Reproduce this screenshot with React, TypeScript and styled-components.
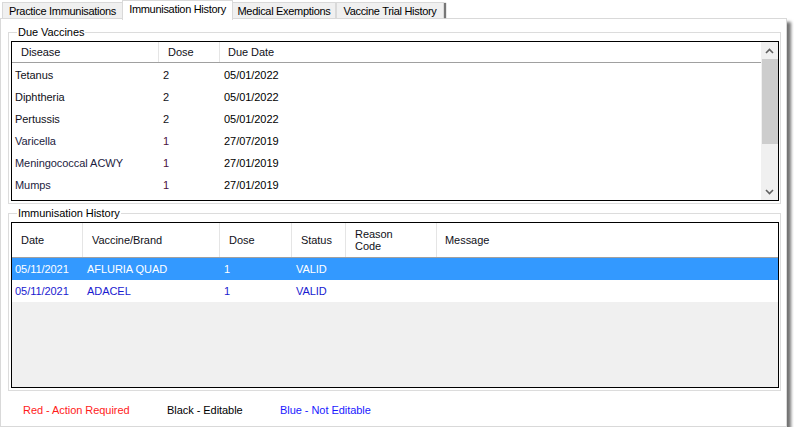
import React from 'react'
import styled, { createGlobalStyle } from 'styled-components'

const GlobalStyle = createGlobalStyle`
  html, body {
    margin: 0;
    padding: 0;
    background: #ffffff;
  }
  body {
    font-family: "Liberation Sans", Arial, sans-serif;
    font-size: 11px;
    letter-spacing: -0.05px;
    color: #000;
  }
`

interface DueVaccine {
  disease: string
  dose: string
  dueDate: string
}

interface HistoryRow {
  date: string
  brand: string
  dose: string
  status: string
}

const dueVaccines: DueVaccine[] = [
  { disease: 'Tetanus', dose: '2', dueDate: '05/01/2022' },
  { disease: 'Diphtheria', dose: '2', dueDate: '05/01/2022' },
  { disease: 'Pertussis', dose: '2', dueDate: '05/01/2022' },
  { disease: 'Varicella', dose: '1', dueDate: '27/07/2019' },
  { disease: 'Meningococcal ACWY', dose: '1', dueDate: '27/01/2019' },
  { disease: 'Mumps', dose: '1', dueDate: '27/01/2019' },
]

const history: HistoryRow[] = [
  { date: '05/11/2021', brand: 'AFLURIA QUAD', dose: '1', status: 'VALID' },
  { date: '05/11/2021', brand: 'ADACEL', dose: '1', status: 'VALID' },
]

// tab label and its width in the strip
const tabs: [string, number][] = [
  ['Practice Immunisations', 121],
  ['Immunisation History', 111],
  ['Medical Exemptions', 104],
  ['Vaccine Trial History', 108],
]

const App: React.FC = () => {
  return (
    <>
      <GlobalStyle />
      <Window>
        <TabStrip>
          {tabs.map(([t, w], i) => (
            <Tab key={t} w={w} active={i === 1} last={i === tabs.length - 1}>
              {t}
            </Tab>
          ))}
        </TabStrip>
        <Panel>
          <GroupBox>
            <Legend>Due Vaccines</Legend>
            <ListBox height={160}>
              <DueBody>
                <DueHeader>
                  <HeaderCell>Disease</HeaderCell>
                  <HeaderCell>Dose</HeaderCell>
                  <HeaderCell last>Due Date</HeaderCell>
                </DueHeader>
                {dueVaccines.map((v) => (
                  <DueRow key={v.disease}>
                    <Cell color={v.dose === '1' ? '#1c1c40' : '#101018'}>{v.disease}</Cell>
                    <Cell color={v.dose === '1' ? '#4a1040' : '#101018'}>{v.dose}</Cell>
                    <Cell>{v.dueDate}</Cell>
                  </DueRow>
                ))}
              </DueBody>
              <ScrollBar>
                <ScrollArrow>
                  <svg width="9" height="6" viewBox="0 0 9 6">
                    <polyline points="1,5 4.5,1.5 8,5" fill="none" stroke="#606060" strokeWidth="1.6" />
                  </svg>
                </ScrollArrow>
                <ScrollTrack>
                  <ScrollThumb />
                </ScrollTrack>
                <ScrollArrow>
                  <svg width="9" height="6" viewBox="0 0 9 6">
                    <polyline points="1,1 4.5,4.5 8,1" fill="none" stroke="#606060" strokeWidth="1.6" />
                  </svg>
                </ScrollArrow>
              </ScrollBar>
            </ListBox>
          </GroupBox>

          <GroupBox second>
            <Legend>Immunisation History</Legend>
            <ListBox height={166}>
              <HistoryBody>
                <HistoryHeader>
                  <HeaderCell>Date</HeaderCell>
                  <HeaderCell>Vaccine/Brand</HeaderCell>
                  <HeaderCell>Dose</HeaderCell>
                  <HeaderCell>Status</HeaderCell>
                  <HeaderCell twoLine>Reason<br />Code</HeaderCell>
                  <HeaderCell last>Message</HeaderCell>
                </HistoryHeader>
                {history.map((h, i) => (
                  <HistoryRowEl key={h.brand} selected={i === 0}>
                    <Cell>{h.date}</Cell>
                    <Cell>{h.brand}</Cell>
                    <Cell>{h.dose}</Cell>
                    <Cell>{h.status}</Cell>
                    <Cell />
                    <Cell />
                  </HistoryRowEl>
                ))}
                <EmptyArea />
              </HistoryBody>
            </ListBox>
          </GroupBox>

          <ColourKey>
            <KeyItem color="#ff1a1a" width={144}>Red - Action Required</KeyItem>
            <KeyItem color="#000000" width={113}>Black - Editable</KeyItem>
            <KeyItem color="#1a1aff">Blue - Not Editable</KeyItem>
          </ColourKey>
        </Panel>
      </Window>
    </>
  )
}

const Window = styled.div`
  width: 787px;
  display: flex;
  flex-direction: column;
`

const TabStrip = styled.div`
  display: flex;
  align-items: flex-end;
  height: 19px;
  padding-left: 2px;
  position: relative;
  z-index: 2;
`

const Tab = styled.div<{ w: number; active?: boolean; last?: boolean }>`
  box-sizing: border-box;
  width: ${(p) => p.w}px;
  height: ${(p) => (p.active ? '20px' : '17px')};
  margin-bottom: ${(p) => (p.active ? '-1px' : '0')};
  padding: 1px 0 0;
  text-align: center;
  letter-spacing: -0.3px;
  border: 1px solid #d9d9d9;
  border-bottom: ${(p) => (p.active ? 'none' : '1px solid #d9d9d9')};
  margin-left: ${(p) => (p.active ? '-1px' : '0')};
  margin-right: ${(p) => (p.active ? '-1px' : '0')};
  background: ${(p) => (p.active ? '#ffffff' : '#f0f0f0')};
  line-height: 14px;
  white-space: nowrap;
  z-index: ${(p) => (p.active ? 2 : 1)};
  box-shadow: ${(p) => (p.last ? '3px 0 1px -1px #777' : 'none')};
`

const Panel = styled.div`
  box-sizing: border-box;
  width: 787px;
  height: 409px;
  margin-top: -1px;
  border: 1px solid #d9d9d9;
  background: #ffffff;
  padding: 7px 5px 0 7px;
  display: flex;
  flex-direction: column;
  box-shadow: 4px 4px 3px rgba(0, 0, 0, 0.55);
  position: relative;
  z-index: 1;
`

const GroupBox = styled.fieldset<{ second?: boolean }>`
  margin: ${(p) => (p.second ? '3px 0 0' : '0')};
  padding: 2px 1px 2px 2px;
  border: 1px solid #dcdcdc;
  min-width: 0;
`

const Legend = styled.legend`
  padding: 0 1px;
  margin-left: 6px;
  line-height: 13px;
  color: #000;
`

const ListBox = styled.div<{ height: number }>`
  box-sizing: border-box;
  height: ${(p) => p.height}px;
  border: 1px solid #000;
  background: #fff;
  display: flex;
  overflow: hidden;
`

const DueBody = styled.div`
  flex: 1;
  display: flex;
  flex-direction: column;
`

const DueHeader = styled.div`
  display: grid;
  grid-template-columns: 147px 61px 1fr;
  height: 20px;
  border-bottom: 1px solid #a0a0a0;
  margin-bottom: 1px;
`

const HeaderCell = styled.div<{ last?: boolean; twoLine?: boolean }>`
  display: flex;
  align-items: center;
  padding-left: ${(p) => (p.last ? '8px' : '9px')};
  border-right: ${(p) => (p.last ? 'none' : '1px solid #e5e5e5')};
  line-height: ${(p) => (p.twoLine ? '12px' : 'normal')};
  color: #101018;
  white-space: nowrap;
`

const DueRow = styled.div`
  display: grid;
  grid-template-columns: 148px 61px 1fr;
  height: 22px;
  align-items: center;
`

const Cell = styled.div<{ color?: string }>`
  padding-left: 3px;
  color: ${(p) => p.color || 'inherit'};
  white-space: nowrap;
`

const ScrollBar = styled.div`
  width: 17px;
  background: #f0f0f0;
  display: flex;
  flex-direction: column;
`

const ScrollArrow = styled.div`
  height: 17px;
  display: flex;
  align-items: center;
  justify-content: center;
`

const ScrollTrack = styled.div`
  flex: 1;
  display: flex;
  flex-direction: column;
`

const ScrollThumb = styled.div`
  margin: 0 0 0 1px;
  height: 85px;
  background: #cdcdcd;
`

const HistoryBody = styled.div`
  flex: 1;
  display: flex;
  flex-direction: column;
`

const HistoryHeader = styled.div`
  display: grid;
  grid-template-columns: 71px 137px 72px 54px 91px 1fr;
  height: 34px;
  border-bottom: 1px solid #a0a0a0;
`

const HistoryRowEl = styled.div<{ selected?: boolean }>`
  display: grid;
  grid-template-columns: 72px 137px 72px 54px 91px 1fr;
  height: 22px;
  align-items: center;
  background: ${(p) => (p.selected ? '#3399ff' : '#ffffff')};
  color: ${(p) => (p.selected ? '#ffffff' : '#1a1ad0')};
`

const EmptyArea = styled.div`
  flex: 1;
  background: #f0f0f0;
`

const ColourKey = styled.div`
  display: flex;
  padding: 12px 0 0 15px;
  line-height: 14px;
`

const KeyItem = styled.div<{ color: string; width?: number }>`
  color: ${(p) => p.color};
  width: ${(p) => (p.width ? `${p.width}px` : 'auto')};
`

export default App
